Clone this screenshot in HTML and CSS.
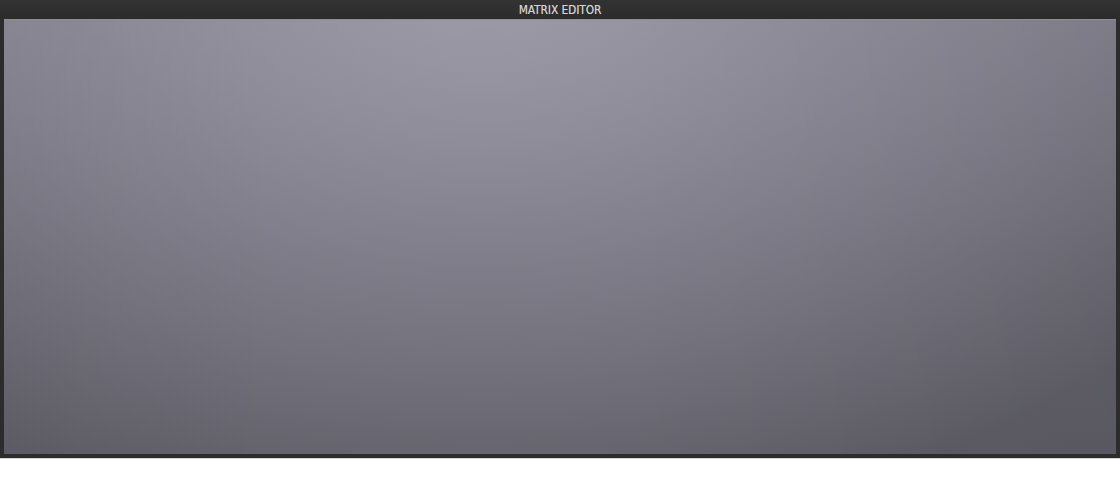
FILE: index.html
```html
<!DOCTYPE html>
<html>
<head>
<meta charset="utf-8">
<link rel="stylesheet" href="styles.css">
</head>
<body>
<div class="editor">
  <div class="titlebar">MATRIX EDITOR</div>
  <div class="canvas"></div>
</div>
</body>
</html>
```
FILE: styles.css
```css
html, body {
  margin: 0;
  padding: 0;
  background: #ffffff;
}
.editor {
  width: 1120px;
  height: 459px;
  box-sizing: border-box;
  background: #2c2c2c;
  padding: 0 4px 4px 4px;
  display: flex;
  flex-direction: column;
  border-bottom: 1px solid #d6d6d6;
}
.titlebar {
  height: 19px;
  line-height: 21px;
  text-align: center;
  font-family: "DejaVu Sans Condensed", "DejaVu Sans", sans-serif;
  font-size: 11.7px;
  color: #d4d4d4;
  text-shadow: 0.3px 0 0 rgba(212,212,212,0.6);
  background: linear-gradient(#333333, #2b2b2b);
  margin: 0 -4px;
}
.canvas {
  flex: 1;
  border-top: 1px solid #8e8c96;
  background:
    radial-gradient(ellipse 860px 560px at 480px -40px, rgba(162,159,173,0.9) 0%, rgba(162,159,173,0.45) 45%, rgba(162,159,173,0) 100%),
    linear-gradient(to right, rgba(0,0,0,0.02) 0%, rgba(0,0,0,0) 30%, rgba(0,0,0,0) 55%, rgba(0,0,0,0.06) 100%),
    linear-gradient(180deg, #7a7984 0%, #686771 55%, #5e5d66 100%);
}
```
